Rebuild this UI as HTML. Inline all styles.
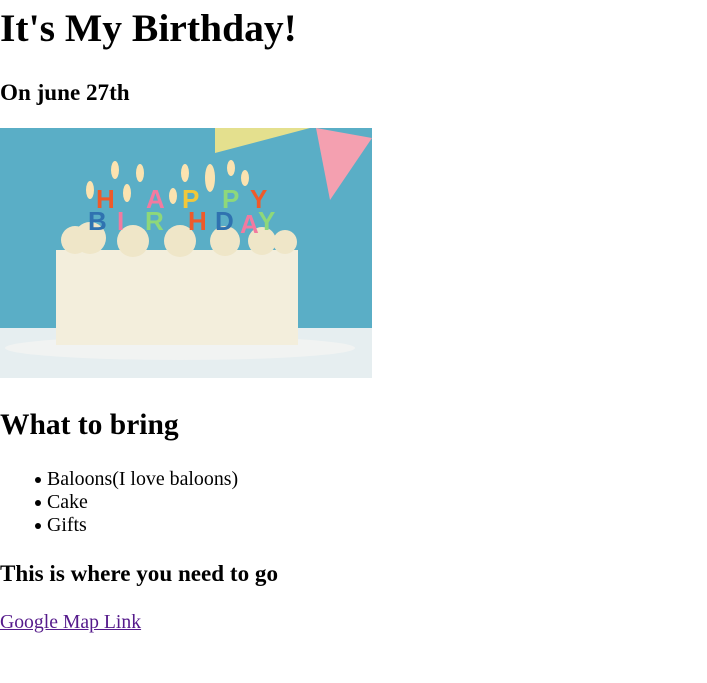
<!DOCTYPE html>
<html><head><meta charset="utf-8"><style>
body{margin:0;background:#fff;font-family:"Liberation Serif",serif;color:#000;width:707px;height:683px;position:relative;overflow:hidden}
.a{position:absolute;left:0;margin:0;line-height:1;white-space:nowrap}
h1{font-size:39.6px;font-weight:bold}
h3{font-size:23.1px;font-weight:bold}
h2{font-size:29.5px;font-weight:bold}
.li{font-size:19.9px;left:47px}
.li:before{content:"";position:absolute;left:-12px;top:7px;width:6px;height:6px;border-radius:50%;background:#000}
a{color:#551a8b;font-size:19.7px}
</style></head><body>
<h1 class="a" style="top:9px">It's My Birthday!</h1>
<h3 class="a" style="top:81px">On june 27th</h3>
<svg class="a" style="top:128px" width="372" height="250" viewBox="0 0 372 250">
<rect width="372" height="250" fill="#5aaec6"/>
<rect y="200" width="372" height="50" fill="#e6eef0"/>
<polygon points="215,25 310,0 215,0" fill="#e4e08e"/>
<polygon points="316,0 372,10 330,72" fill="#f4a0b0"/>
<ellipse cx="180" cy="220" rx="175" ry="12" fill="#f1f3f2"/>
<rect x="56" y="122" width="242" height="95" fill="#f3eedc"/>
<g fill="#efe6c8"><circle cx="75" cy="112" r="14"/><circle cx="90" cy="110" r="16"/><circle cx="133" cy="113" r="16"/><circle cx="180" cy="113" r="16"/><circle cx="225" cy="113" r="15"/><circle cx="262" cy="113" r="14"/><circle cx="285" cy="114" r="12"/></g>
<g font-family="Liberation Sans" font-weight="bold" font-size="26"><text x="96" y="80" fill="#ee5a2a">H</text><text x="146" y="80" fill="#f27aa0">A</text><text x="182" y="80" fill="#f2c83a">P</text><text x="222" y="80" fill="#8ed87a">P</text><text x="250" y="80" fill="#ee5a2a">Y</text>
<text x="88" y="102" fill="#2f72b0">B</text><text x="117" y="102" fill="#f27aa0">I</text><text x="145" y="102" fill="#8ed87a">R</text><text x="188" y="102" fill="#ee5a2a">H</text><text x="215" y="102" fill="#2f72b0">D</text><text x="240" y="105" fill="#f27aa0">A</text><text x="258" y="102" fill="#8ed87a">Y</text></g>
<g fill="#fbe3b0"><ellipse cx="90" cy="62" rx="4" ry="9"/><ellipse cx="115" cy="42" rx="4" ry="9"/><ellipse cx="140" cy="45" rx="4" ry="9"/><ellipse cx="185" cy="45" rx="4" ry="9"/><ellipse cx="210" cy="50" rx="5" ry="14"/><ellipse cx="231" cy="40" rx="4" ry="8"/><ellipse cx="245" cy="50" rx="4" ry="8"/><ellipse cx="127" cy="65" rx="4" ry="9"/><ellipse cx="173" cy="68" rx="4" ry="8"/></g>
</svg>
<h2 class="a" style="top:411px">What to bring</h2>
<div class="a li" style="top:470px">Baloons(I love baloons)</div>
<div class="a li" style="top:493px">Cake</div>
<div class="a li" style="top:516px">Gifts</div>
<h3 class="a" style="top:562px">This is where you need to go</h3>
<a class="a" style="top:613px" href="#">Google Map Link</a>
</body></html>
